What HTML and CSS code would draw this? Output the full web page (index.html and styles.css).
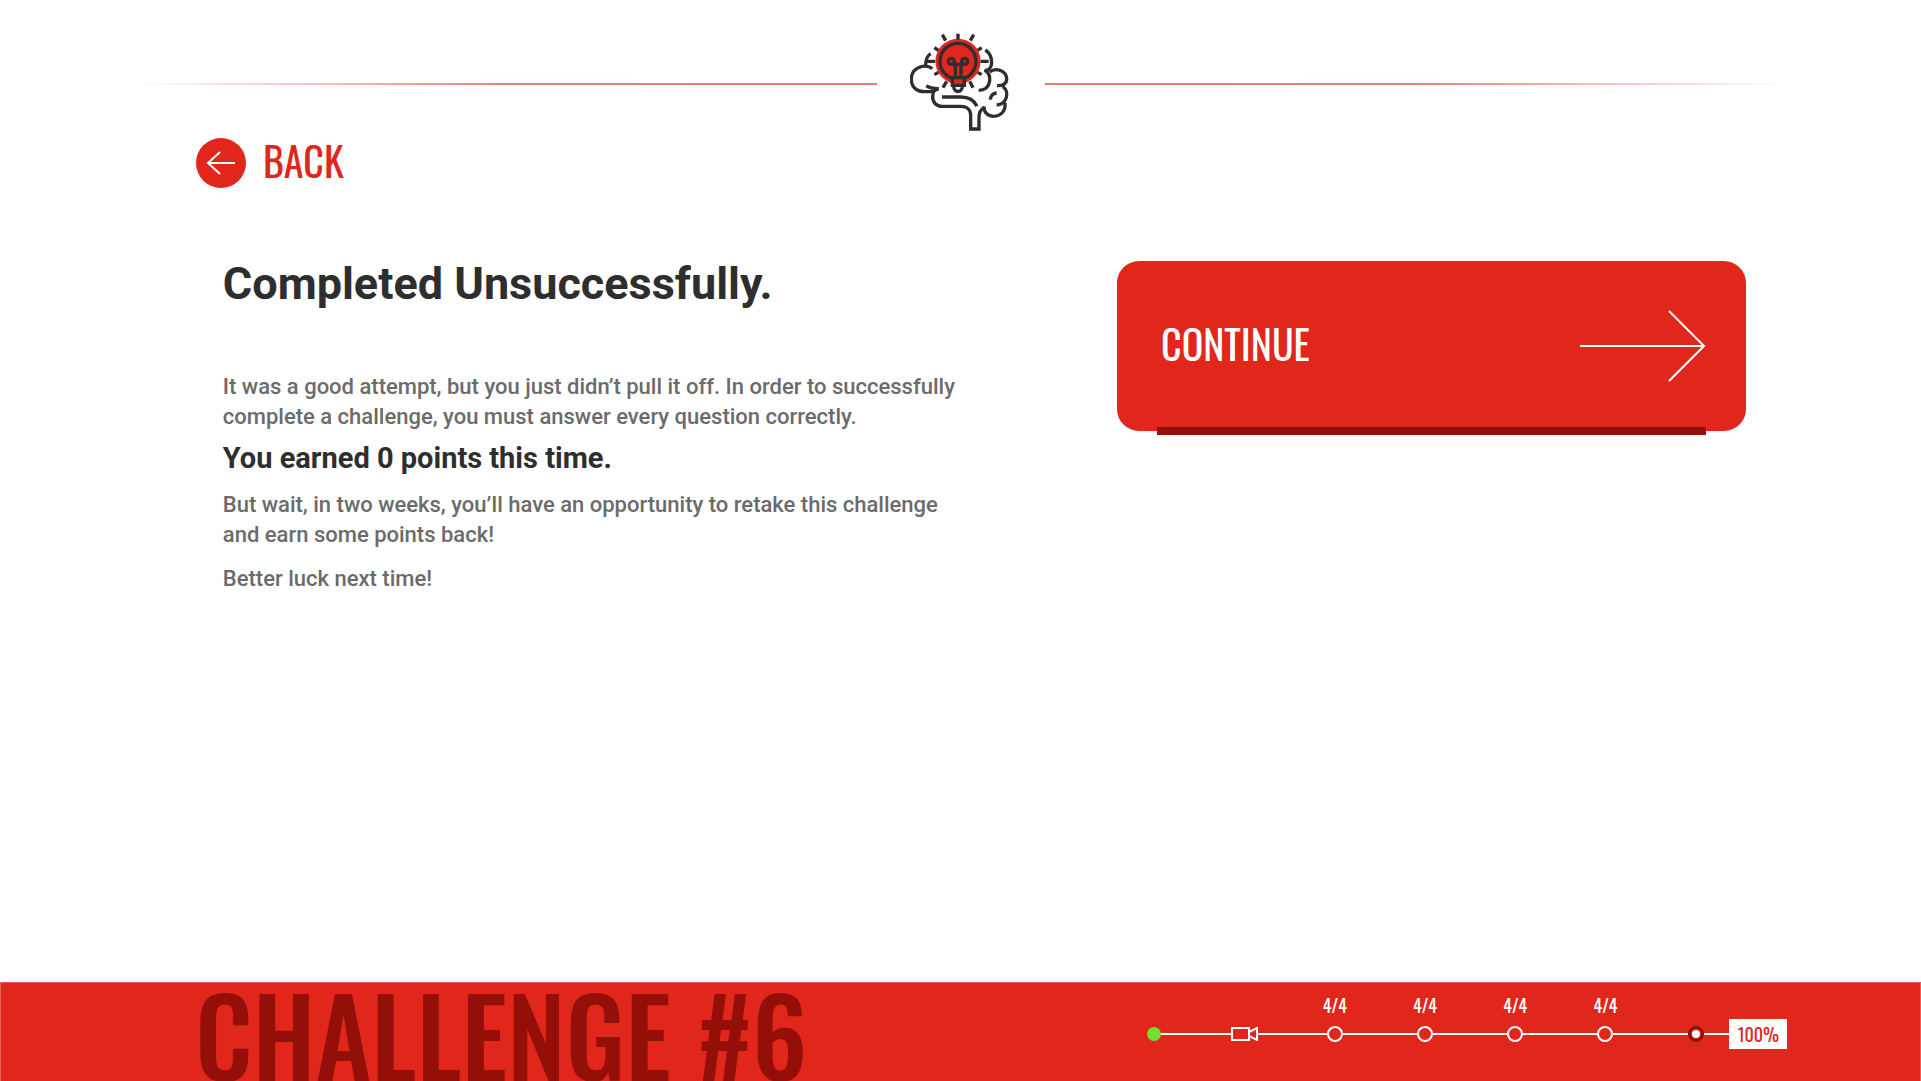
FILE: index.html
```html
<!DOCTYPE html>
<html lang="en">
<head>
<meta charset="utf-8">
<meta name="viewport" content="width=device-width, initial-scale=1">
<title>Challenge #6</title>
<link rel="stylesheet" href="styles.css">
</head>
<body>
<header class="top">
  <span class="rule rule-left"></span>
  <svg class="logo" viewBox="60 36 306 300" role="img" aria-label="Brain and light bulb">
    <circle class="bulb-glow" cx="204" cy="124" r="68"/>
    <g class="ink">
      <circle cx="204" cy="124" r="54"/>
      <circle cx="184" cy="124" r="9"/>
      <circle cx="224" cy="124" r="9"/>
      <path d="M186 133H222M196 131V172M213 131V172"/>
      <path class="bulb-base" d="M187 173H223V196H187Z"/>
      <path d="M191 198C191 220 217 220 217 198"/>
      <path d="M204 41V59M157 44L167 62M251 44L241 62M133 83L145 91M275 83L263 91M106 124H135M272 124H296M133 164L145 157M275 164L263 157M159 203L170 184M249 203L239 184"/>
      <path d="M122 101C112 107 107 120 107 136"/>
      <path d="M127 146C108 131 64 139 64 178C64 202 81 215 102 215H124C132 215 138 208 146 206"/>
      <path d="M109 197C118 204 130 206 146 206C134 206 128 218 128 230C128 248 140 259 156 259H213C232 259 242 270 242 286V327H267V290C267 275 273 268 283 262"/>
      <path d="M156 231H213C237 231 253 242 261 259"/>
      <path d="M286 90C300 99 305 114 305 128C305 140 298 151 284 151C297 158 301 168 299 184C296 202 284 211 266 211"/>
      <path d="M299 156C318 141 350 152 350 178C350 191 339 198 321 197"/>
      <path d="M338 200C359 213 353 253 320 255"/>
      <path d="M345 248C348 274 331 289 311 289C292 289 281 276 282 259"/>
      <path d="M301 239C302 227 310 220 320 219"/>
    </g>
  </svg>
  <span class="rule rule-right"></span>
</header>

<nav class="back-row">
  <a class="back" href="#">
    <svg class="back-icon" viewBox="0 0 50 50" aria-hidden="true">
      <circle cx="25" cy="25" r="25"/>
      <path d="M39 25H12M24 14L12 25L24 36"/>
    </svg>
    <span class="label">BACK</span>
  </a>
</nav>

<main class="content">
  <section class="result">
    <h1>Completed Unsuccessfully.</h1>
    <p>It was a good attempt, but you just didn’t pull it off. In order to successfully complete a challenge, you must answer every question correctly.</p>
    <h2>You earned 0 points this time.</h2>
    <p>But wait, in two weeks, you’ll have an opportunity to retake this challenge and earn some points back!</p>
    <p>Better luck next time!</p>
  </section>
  <button class="continue" type="button">
    <span class="label">CONTINUE</span>
    <svg class="continue-arrow" viewBox="0 0 126 72" aria-hidden="true">
      <path d="M0 36H124M89 1L124 36L89 71"/>
    </svg>
  </button>
</main>

<footer class="bottom">
  <div class="challenge">CHALLENGE #6</div>
  <ol class="progress">
    <li class="stop start"></li>
    <li class="link"></li>
    <li class="stop">
      <svg class="camera" viewBox="0 0 27 16" aria-hidden="true">
        <path d="M1 2H18V14H1ZM18 6L26 2V14L18 10"/>
      </svg>
    </li>
    <li class="link"></li>
    <li class="stop ring"><span class="score">4/4</span></li>
    <li class="link wide"></li>
    <li class="stop ring"><span class="score">4/4</span></li>
    <li class="link wide"></li>
    <li class="stop ring"><span class="score">4/4</span></li>
    <li class="link wide"></li>
    <li class="stop ring"><span class="score">4/4</span></li>
    <li class="link wide"></li>
    <li class="stop current"></li>
    <li class="link short"></li>
    <li class="percent">100%</li>
  </ol>
</footer>
</body>
</html>
```
FILE: styles.css
```css
:root {
  --red: #e1261c;
  --dark-red: #930f08;
  --ink: #2e2e2e;
  --grey: #6b6b6b;
  --display: Oswald, "Liberation Sans Narrow", "Arial Narrow", "Liberation Sans", sans-serif;
}

* {
  box-sizing: border-box;
}

body {
  margin: 0;
  min-height: 100vh;
  display: flex;
  flex-direction: column;
  background: #fff;
  color: var(--ink);
  font-family: Roboto, sans-serif;
}

.top {
  display: flex;
  align-items: center;
  gap: 33px;
  padding: 32px 7% 0;
}

.rule {
  flex: 1;
  height: 2px;
  margin-top: 4px;
}

.rule-left {
  background: linear-gradient(to left, #ea7a74, #ec7f79 50%, #fff);
}

.rule-right {
  background: linear-gradient(to right, #ea7a74, #ec7f79 50%, #fff);
}

.logo {
  width: 102px;
  height: 100px;
}

.ink {
  fill: none;
  stroke: var(--ink);
  stroke-width: 10;
}

.bulb-glow,
.ink .bulb-base {
  fill: var(--red);
}

.back-row {
  padding: 6px 10% 0 10.2%;
}

.back {
  display: inline-flex;
  align-items: center;
  gap: 17px;
  color: var(--red);
  font: 400 40px/44px var(--display);
  text-decoration: none;
}

.label {
  padding-bottom: 6px;
}

.back-icon {
  width: 50px;
  height: 50px;
  fill: var(--red);
}

.back-icon path {
  fill: none;
  stroke: #fff;
  stroke-width: 2;
}

.content {
  flex: 1;
  display: grid;
  grid-template-columns: 49% 41.3%;
  justify-content: space-between;
  align-items: start;
  padding: 69px 9.1% 40px 11.6%;
}

h1 {
  margin: 0 0 65px;
  font-size: 45px;
  line-height: 46px;
  font-weight: 700;
}

h2 {
  margin: 8px 0 0;
  font-size: 29px;
  line-height: 36px;
  font-weight: 700;
}

p {
  margin: 14px 0 0;
  color: var(--grey);
  font-size: 22px;
  line-height: 30px;
  font-weight: 500;
}

.continue {
  position: relative;
  display: flex;
  align-items: center;
  justify-content: space-between;
  height: 170px;
  padding: 0 40px 0 44px;
  border: 0;
  border-radius: 22px;
  background: var(--red);
  color: #fff;
  font: 400 40px/44px var(--display);
  cursor: pointer;
}

.continue::after {
  content: "";
  position: absolute;
  left: 40px;
  right: 40px;
  bottom: -4px;
  height: 8px;
  background: var(--dark-red);
}

.continue-arrow {
  width: 126px;
  height: 72px;
  fill: none;
  stroke: #fff;
  stroke-width: 2;
}

.bottom {
  display: flex;
  justify-content: space-between;
  height: 99px;
  padding: 0 6.9% 0 10.1%;
  border: 1px solid #e86059;
  border-bottom: 0;
  background: var(--red);
}

.challenge {
  color: var(--dark-red);
  font: 500 107px/100px var(--display);
  white-space: nowrap;
}

.progress {
  display: flex;
  align-items: center;
  width: 40.2%;
  height: 30px;
  margin: 36px 0 0;
  padding: 0;
  list-style: none;
}

.link {
  flex: 70;
  height: 2px;
  background: #fff;
}

.link.wide {
  flex-grow: 75;
}

.link.short {
  flex-grow: 26;
}

.stop {
  position: relative;
  display: flex;
}

.start {
  width: 14px;
  height: 14px;
  border-radius: 50%;
  background: #76dd35;
}

.camera {
  width: 27px;
  height: 16px;
  fill: none;
  stroke: #fff;
  stroke-width: 2;
}

.ring,
.current {
  width: 16px;
  height: 16px;
  border: 2px solid #fff;
  border-radius: 50%;
}

.current {
  padding: 1px;
  border: 3px solid var(--dark-red);
  background: #fff content-box;
}

.score {
  position: absolute;
  left: 50%;
  bottom: 23px;
  transform: translateX(-50%);
  color: #fff;
  font: 400 18px/24px var(--display);
}

.percent {
  width: 58px;
  background: #fff;
  color: var(--red);
  font: 400 18px/30px var(--display);
  text-align: center;
}
```
